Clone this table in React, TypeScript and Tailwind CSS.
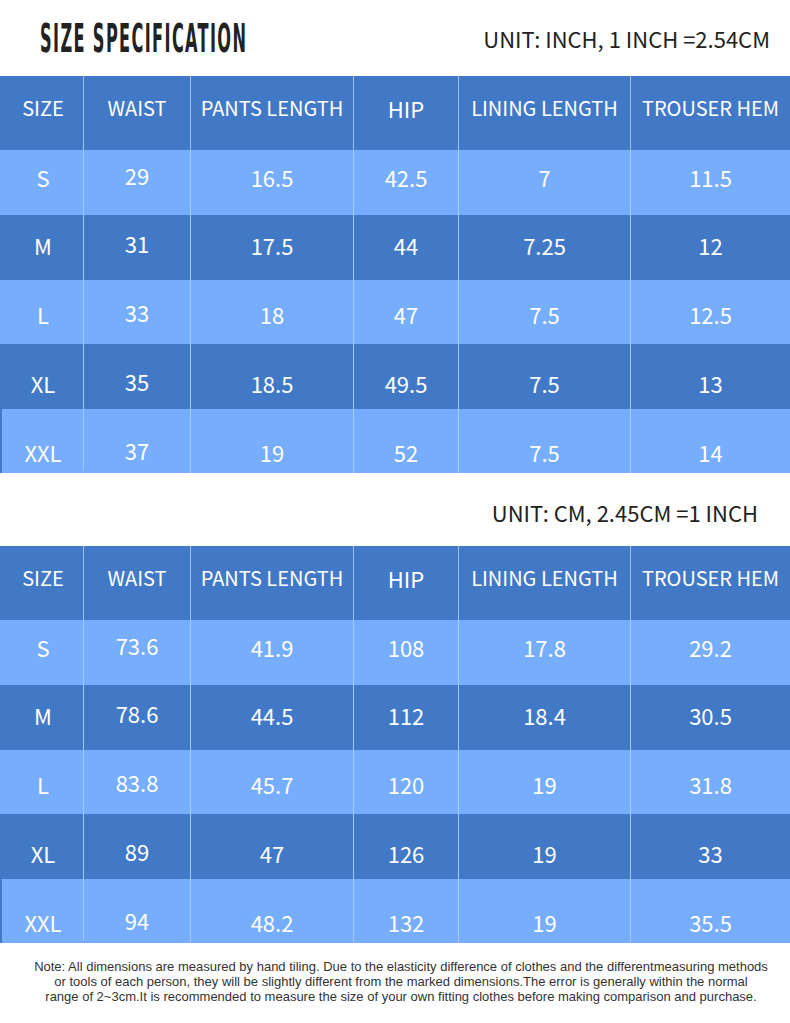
const cols = ['w-[83px]', 'w-[107px]', 'w-[163px]', 'w-[105px]', 'w-[172px]', 'w-[160px]'];
const headers = ['SIZE', 'WAIST', 'PANTS LENGTH', 'HIP', 'LINING LENGTH', 'TROUSER HEM'];

// row bg, height and text top padding (the text drifts lower down the table)
const rowStyles = [
  { bg: 'bg-[#76adfc]', h: 'h-[65px]', pt: 'pt-[13px]' },
  { bg: 'bg-[#4279c6]', h: 'h-[65px]', pt: 'pt-[16px]' },
  { bg: 'bg-[#76adfc]', h: 'h-[64px]', pt: 'pt-[20px]' },
  { bg: 'bg-[#4279c6]', h: 'h-[65px]', pt: 'pt-[25px]' },
  { bg: 'bg-[#76adfc] shadow-[inset_2px_0_0_#4279c6]', h: 'h-[64px]', pt: 'pt-[29px]' },
];

const inchRows = [
  ['S', '29', '16.5', '42.5', '7', '11.5'],
  ['M', '31', '17.5', '44', '7.25', '12'],
  ['L', '33', '18', '47', '7.5', '12.5'],
  ['XL', '35', '18.5', '49.5', '7.5', '13'],
  ['XXL', '37', '19', '52', '7.5', '14'],
];

const cmRows = [
  ['S', '73.6', '41.9', '108', '17.8', '29.2'],
  ['M', '78.6', '44.5', '112', '18.4', '30.5'],
  ['L', '83.8', '45.7', '120', '19', '31.8'],
  ['XL', '89', '47', '126', '19', '33'],
  ['XXL', '94', '48.2', '132', '19', '35.5'],
];

function SizeTable({ rows }: { rows: string[][] }) {
  return (
    <div className="flex flex-col text-white leading-[28px]">
      {/* Header */}
      <div className="flex h-[74px] bg-[#4279c6]">
        {headers.map((h, i) => (
          <div
            key={h}
            className={`${cols[i]} pt-[18px] text-center whitespace-nowrap ${i > 0 ? 'border-l border-[#9cc0f2]' : 'pl-[3px]'} ${h === 'HIP' ? 'text-[22px]' : 'text-[20px]'}`}
          >
            {h}
          </div>
        ))}
      </div>
      {rows.map((row, r) => (
        <div key={r} className={`flex text-[22px] ${rowStyles[r].bg} ${rowStyles[r].h}`}>
          {row.map((cell, i) => (
            <div
              key={i}
              className={`${cols[i]} ${rowStyles[r].pt} text-center ${i > 0 ? 'border-l border-[#a6c9fb]' : 'pl-[3px]'} ${i === 1 ? '-translate-y-[2px]' : ''}`}
            >
              {cell}
            </div>
          ))}
        </div>
      ))}
    </div>
  );
}

export default function App() {
  return (
    <div className="w-[790px] bg-white font-['Noto_Sans_CJK_SC',sans-serif]">
      {/* Title */}
      <div className="flex h-[76px] items-center justify-between pl-[40px] pr-[20px]">
        <div className="w-[210px]">
          <span className="inline-block origin-left scale-x-[0.46] whitespace-nowrap font-['DejaVu_Sans_Condensed','DejaVu_Sans',sans-serif] text-[39px] font-bold leading-none tracking-[3px] text-[#222]">
            SIZE SPECIFICATION
          </span>
        </div>
        <div className="text-[22px] leading-[28px] text-[#222]">UNIT: INCH, 1 INCH =2.54CM</div>
      </div>

      <SizeTable rows={inchRows} />

      <div className="flex h-[73px] items-center justify-end pr-[32px] pt-[4px]">
        <div className="text-[22px] leading-[28px] text-[#222]">UNIT: CM, 2.45CM =1 INCH</div>
      </div>

      <SizeTable rows={cmRows} />

      {/* Note */}
      <div className="flex flex-col items-center pl-[12px] pt-[16px] pb-[20px] font-['Liberation_Sans',sans-serif] text-[13px] leading-[15px] text-[#333] whitespace-nowrap">
        <div>
          Note: All dimensions are measured by hand tiling. Due to the elasticity difference of clothes and the differentmeasuring methods
        </div>
        <div>
          or tools of each person, they will be slightly different from the marked dimensions.The error is generally within the normal
        </div>
        <div>
          range of 2~3cm.It is recommended to measure the size of your own fitting clothes before making comparison and purchase.
        </div>
      </div>
    </div>
  );
}
